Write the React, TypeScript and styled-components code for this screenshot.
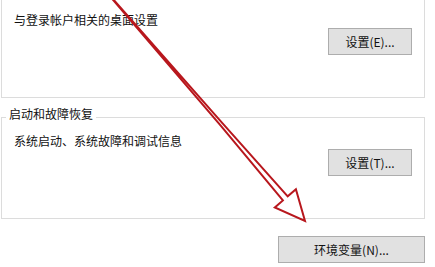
import React from 'react';
import styled, { createGlobalStyle } from 'styled-components';

const GlobalStyle = createGlobalStyle`
  html, body {
    margin: 0;
    padding: 0;
    background: #ffffff;
  }
  body {
    font-family: "Noto Sans CJK SC", "Noto Sans", "Liberation Sans", sans-serif;
    font-size: 12px;
    color: #111111;
  }
`;

const Page = styled.div`
  position: relative;
  width: 435px;
  height: 267px;
  overflow: hidden;
  background: #ffffff;
`;

const Column = styled.div`
  display: flex;
  flex-direction: column;
  width: 424px;
  padding-left: 1px;
`;

const GroupBox = styled.fieldset<{ first?: boolean }>`
  display: flex;
  flex-direction: column;
  justify-content: space-between;
  box-sizing: border-box;
  margin: ${p => (p.first ? '-10px 0 0' : '8px 0 0')};
  padding: ${p => (p.first ? '21px 12px 13px 12px' : '5px 12px 14px 12px')};
  min-width: 0;
  height: ${p => (p.first ? '108px' : '113px')};
  border: 1px solid #dcdcdc;
`;

const Legend = styled.legend`
  margin-left: -8px;
  padding: 0 3px 6px;
  line-height: 16px;
  font-size: 12px;
  color: #111111;
`;

const Description = styled.div`
  line-height: 16px;
  white-space: nowrap;
`;

const ButtonRow = styled.div<{ outer?: boolean }>`
  display: flex;
  justify-content: flex-end;
  margin-top: ${p => (p.outer ? '17px' : '0')};
`;

const Button = styled.button<{ wide?: boolean }>`
  box-sizing: border-box;
  width: ${p => (p.wide ? '147px' : '84px')};
  height: 27px;
  margin: 0;
  padding: 0;
  background: #e1e1e1;
  border: 1px solid #adadad;
  font-family: "Noto Sans CJK SC", "Noto Sans", "Liberation Sans", sans-serif;
  font-size: 12px;
  line-height: 16px;
  color: #111111;
`;

const Overlay = styled.svg`
  position: absolute;
  left: 0;
  top: 0;
  pointer-events: none;
`;

// hollow red arrow drawn over the dialog
const Arrow: React.FC = () => {
  const ux = 0.656;
  const uy = 0.755;
  const nx = -0.755;
  const ny = 0.656;
  const tip = [305, 221];
  const tail = [110, -4];
  const base = [tip[0] - 30 * ux, tip[1] - 30 * uy];
  const mid = [tail[0] + 170 * ux, tail[1] + 170 * uy];
  const at = (p: number[], w: number) => `${(p[0] + w * nx).toFixed(1)},${(p[1] + w * ny).toFixed(1)}`;
  const points = [
    at(tail, 0.2),
    at(mid, 1.4),
    at(base, 3.2),
    at(base, 14),
    `${tip[0]},${tip[1]}`,
    at(base, -14),
    at(base, -3.2),
    at(mid, -1.4),
    at(tail, -0.2),
  ].join(' ');

  return (
    <Overlay width="435" height="267" viewBox="0 0 435 267">
      <polygon
        points={points}
        fill="none"
        stroke="#b8171d"
        strokeWidth="2"
        strokeLinejoin="miter"
      />
    </Overlay>
  );
};

const App: React.FC = () => (
  <>
    <GlobalStyle />
    <Page>
      <Column>
        <GroupBox first>
          <Description>与登录帐户相关的桌面设置</Description>
          <ButtonRow>
            <Button>设置(E)...</Button>
          </ButtonRow>
        </GroupBox>
        <GroupBox>
          <Legend>启动和故障恢复</Legend>
          <Description>系统启动、系统故障和调试信息</Description>
          <ButtonRow>
            <Button>设置(T)...</Button>
          </ButtonRow>
        </GroupBox>
        <ButtonRow outer>
          <Button wide>环境变量(N)...</Button>
        </ButtonRow>
      </Column>
      <Arrow />
    </Page>
  </>
);

export default App;
